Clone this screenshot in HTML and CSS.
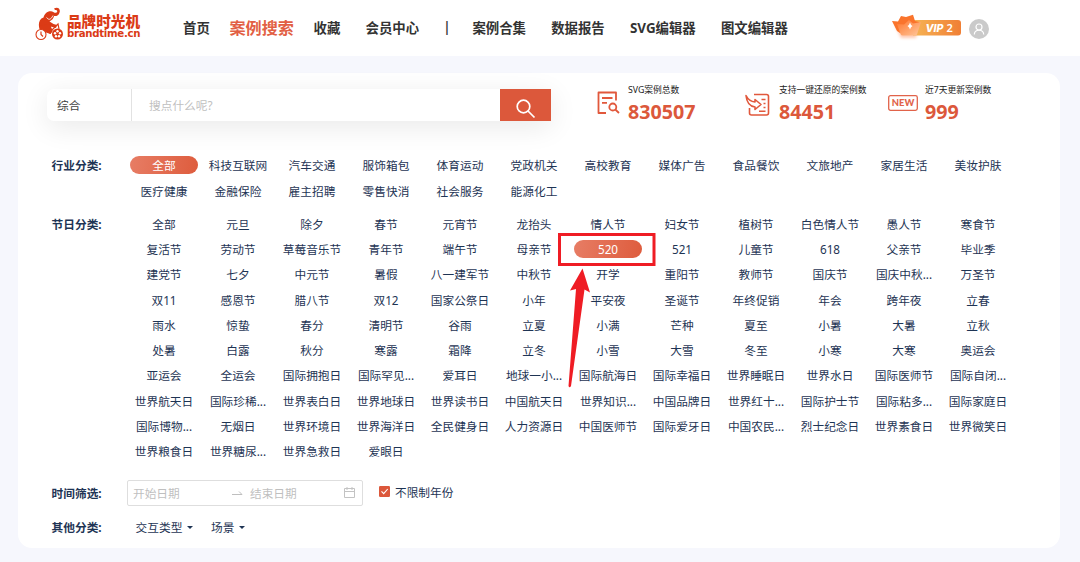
FILE: index.html
```html
<!DOCTYPE html>
<html lang="zh-CN">
<head>
    <meta charset="UTF-8">
    <meta name="viewport" content="width=device-width, initial-scale=1.0">
    <title>品牌时光机</title>
    <link rel="stylesheet" href="styles.css">
</head>
<body>
    <header class="header">
        <a class="logo">
            <svg width="30" height="36" viewBox="0 0 30 36">
                <g fill="#db3b16">
                    <path d="M4.500 22C3 17 4 12 8.500 10.500C9.500 6.500 13 3.500 17 4.500C18.500 5 20 6.500 21.500 5.500C23 4.500 22 2.500 20 3L19 1.500C22.500-.5 25.500 1.500 24.700 5C24 8.500 21 9.500 19 9C18.500 11.500 17 13 14.500 14.500L18.500 17L22 18L21 21L15.500 19.500L17.500 24L15.500 27L11 24.500L8 26Z"/>
                    <circle cx="22.500" cy="27" r="5.500"/>
                </g>
                <path d="M11.500 10.500Q15 15 18 8.500" fill="none" stroke="#fff" stroke-width=".8"/>
                <circle cx="6" cy="27.500" r="5" fill="#fff" stroke="#db3b16" stroke-width="1.100"/>
                <path d="M4.500 19L15 17L17.500 24L15.500 27L11 25.500Q9 21.800 5 22Z" fill="#db3b16"/>
                <path d="M6 24.500V27.500L8 29.500M16 24L23 17L24 22" fill="none" stroke="#db3b16" stroke-width="1.200"/>
                <g fill="#fff">
                    <circle cx="22.500" cy="24.300" r="1.200"/><circle cx="25" cy="26.300" r="1.200"/>
                    <circle cx="24" cy="29.200" r="1.200"/><circle cx="21" cy="29.200" r="1.200"/><circle cx="20" cy="26.300" r="1.200"/>
                </g>
            </svg>
            <span class="logo-text">
                <b class="logo-name">品牌时光机</b>
                <b class="logo-domain">brandtime.cn</b>
            </span>
        </a>
        <nav class="nav">
            <a>首页</a>
            <a class="active">案例搜索</a>
            <a>收藏</a>
            <a>会员中心</a>
            <span class="divider">|</span>
            <a>案例合集</a>
            <a>数据报告</a>
            <a>SVG编辑器</a>
            <a>图文编辑器</a>
        </nav>
        <div class="user">
            <svg width="72" height="28" viewBox="0 0 72 28">
                <defs>
                    <linearGradient id="bar"><stop offset="0" stop-color="#f6b455"/><stop offset="1" stop-color="#f07f35"/></linearGradient>
                    <linearGradient id="crown" x2="1" y2="1"><stop offset="0" stop-color="#ff762c"/><stop offset="1" stop-color="#ffc89d"/></linearGradient>
                    <filter id="glow" x="-30%" y="-30%" width="160%" height="160%"><feGaussianBlur stdDeviation="1.500"/></filter>
                </defs>
                <path d="M4 11L28 10L25 24H10Z" fill="#ff8a55" opacity=".45" filter="url(#glow)"/>
                <path d="M22 6H67Q70 6 70 9V18.500Q70 21.500 67 21.500H22Z" fill="url(#bar)"/>
                <path d="M1 7L7 7.500L10 2L15 3L22 .8L24 7L28 8L24 19H9L6 17Z" fill="#fa742c"/>
                <path d="M6 10L13 10.500L18 6L22 9.500L30 8L26 20.500Q25 21.500 24 21.500H12Q10 21.500 9.500 20Z" fill="url(#crown)"/>
                <path d="M19 8.500Q19.500 11 21.500 12Q19.500 13 19 15.500Q18.500 13 16.500 12Q18.500 11 19 8.500Z" fill="#fff"/>
                <text class="vip-name" x="34.500" y="18" textLength="18" lengthAdjust="spacingAndGlyphs">VIP</text>
                <text class="vip-level" x="55.500" y="18">2</text>
            </svg>
            <svg class="avatar" width="20" height="20" viewBox="0 0 20 20">
                <circle cx="10" cy="10" r="10" fill="#cacaca"/>
                <g fill="none" stroke="#fff" stroke-width="1.200"><circle cx="10" cy="8" r="3"/><path d="M5.300 15.500C5.500 9.800 14.500 9.800 14.700 15.500"/></g>
            </svg>
        </div>
    </header>

    <main class="panel">
        <div class="top">
            <div class="search">
                <div class="search-type">综合</div>
                <div class="search-input">搜点什么呢?</div>
                <button class="search-btn">
                    <svg width="20" height="20" viewBox="0 0 20 20" fill="none" stroke="#fff" stroke-width="1.700"><circle cx="7.500" cy="7.500" r="6.300"/><path d="M12 12L18.500 18.500"/></svg>
                </button>
            </div>
            <div class="stat stat-total">
                <svg width="23" height="24" viewBox="0 0 23 24" fill="none" stroke="#e1583c" stroke-width="1.800">
                    <path d="M19 9.500V1.500H1.500V22H9M5 7H15.500M5 11.800H10" stroke-linejoin="round"/><circle cx="15.800" cy="16" r="3.500"/><path d="M18.300 18.500L22 22"/>
                </svg>
                <div><p>SVG案例总数</p><strong>830507</strong></div>
            </div>
            <div class="stat stat-restore">
                <svg width="25" height="24" viewBox="0 0 25 24" fill="none" stroke="#e1583c" stroke-width="1.600">
                    <path d="M9 1.500H21.500Q23.500 1.500 23.500 3.500V20Q23.500 22 21.500 22H6.500Q4.500 22 4.500 20V15"/>
                    <path d="M1 2.500Q4 8.500 10 9V6.500L16 11.500L10 16.500V14Q2 13 1 2.500Z" stroke-linejoin="round"/>
                    <path d="M16.500 6.500H20.500M18.500 10.500H20.500M18.500 14.500H20.500M14 18.300H20.500"/>
                </svg>
                <div><p>支持一键还原的案例数</p><strong>84451</strong></div>
            </div>
            <div class="stat stat-new">
                <svg width="30" height="16" viewBox="0 0 30 16">
                    <rect x=".7" y=".7" width="28.600" height="14.600" rx="1.800" fill="none" stroke="#e1634a" stroke-width="1.300"/>
                    <text class="new-text" x="3.800" y="11.300" textLength="22.500" lengthAdjust="spacingAndGlyphs">NEW</text>
                </svg>
                <div><p>近7天更新案例数</p><strong>999</strong></div>
            </div>
        </div>

        <section class="filter">
            <h3>行业分类:</h3>
            <div class="options">
                <a class="selected">全部</a><a>科技互联网</a><a>汽车交通</a><a>服饰箱包</a><a>体育运动</a><a>党政机关</a><a>高校教育</a><a>媒体广告</a><a>食品餐饮</a><a>文旅地产</a><a>家居生活</a><a>美妆护肤</a>
                <a>医疗健康</a><a>金融保险</a><a>雇主招聘</a><a>零售快消</a><a>社会服务</a><a>能源化工</a>
            </div>
        </section>

        <section class="filter festival">
            <h3>节日分类:</h3>
            <div class="options">
                <a>全部</a><a>元旦</a><a>除夕</a><a>春节</a><a>元宵节</a><a>龙抬头</a><a>情人节</a><a>妇女节</a><a>植树节</a><a>白色情人节</a><a>愚人节</a><a>寒食节</a>
                <a>复活节</a><a>劳动节</a><a>草莓音乐节</a><a>青年节</a><a>端午节</a><a>母亲节</a>
                <a class="selected marked">520
                    <svg class="marker" width="98" height="156" viewBox="0 0 98 156">
                        <rect x="1.500" y="1.500" width="94.500" height="30" fill="none" stroke="#ef1c24" stroke-width="3"/>
                        <path d="M24.500 35.500L32 59.500L26.500 56.500L13 153Q11.500 155.500 10.500 153L18 56L12 57.500Z" fill="#ef1c24"/>
                    </svg>
                </a>
                <a>521</a><a>儿童节</a><a>618</a><a>父亲节</a><a>毕业季</a>
                <a>建党节</a><a>七夕</a><a>中元节</a><a>暑假</a><a>八一建军节</a><a>中秋节</a><a>开学</a><a>重阳节</a><a>教师节</a><a>国庆节</a><a>国庆中秋...</a><a>万圣节</a>
                <a>双11</a><a>感恩节</a><a>腊八节</a><a>双12</a><a>国家公祭日</a><a>小年</a><a>平安夜</a><a>圣诞节</a><a>年终促销</a><a>年会</a><a>跨年夜</a><a>立春</a>
                <a>雨水</a><a>惊蛰</a><a>春分</a><a>清明节</a><a>谷雨</a><a>立夏</a><a>小满</a><a>芒种</a><a>夏至</a><a>小暑</a><a>大暑</a><a>立秋</a>
                <a>处暑</a><a>白露</a><a>秋分</a><a>寒露</a><a>霜降</a><a>立冬</a><a>小雪</a><a>大雪</a><a>冬至</a><a>小寒</a><a>大寒</a><a>奥运会</a>
                <a>亚运会</a><a>全运会</a><a>国际拥抱日</a><a>国际罕见...</a><a>爱耳日</a><a>地球一小...</a><a>国际航海日</a><a>国际幸福日</a><a>世界睡眠日</a><a>世界水日</a><a>国际医师节</a><a>国际自闭...</a>
                <a>世界航天日</a><a>国际珍稀...</a><a>世界表白日</a><a>世界地球日</a><a>世界读书日</a><a>中国航天日</a><a>世界知识...</a><a>中国品牌日</a><a>世界红十...</a><a>国际护士节</a><a>国际粘多...</a><a>国际家庭日</a>
                <a>国际博物...</a><a>无烟日</a><a>世界环境日</a><a>世界海洋日</a><a>全民健身日</a><a>人力资源日</a><a>中国医师节</a><a>国际爱牙日</a><a>中国农民...</a><a>烈士纪念日</a><a>世界素食日</a><a>世界微笑日</a>
                <a>世界粮食日</a><a>世界糖尿...</a><a>世界急救日</a><a>爱眼日</a>
            </div>
        </section>

        <section class="filter time">
            <h3>时间筛选:</h3>
            <div class="range">
                <span class="range-start">开始日期</span>
                <svg width="11" height="6" viewBox="0 0 11 6" fill="none" stroke="#bfbfbf"><path d="M0 4.500H10L7 1.500"/></svg>
                <span class="range-end">结束日期</span>
                <svg width="11" height="11" viewBox="0 0 11 11" fill="none" stroke="#c3c3c3"><path d="M.5 1.500H10.500V10.500H.5ZM.5 4.500H10.500M3 0V3M8 0V3"/></svg>
            </div>
            <label class="check">
                <svg width="11" height="11" viewBox="0 0 11 11"><rect width="11" height="11" rx="1.200" fill="#dc583b"/><path d="M2.500 5.300L4.700 7.700L8.700 3" fill="none" stroke="#fff" stroke-width="1.100"/></svg>
                不限制年份
            </label>
        </section>

        <section class="filter other">
            <h3>其他分类:</h3>
            <span class="dropdown">交互类型</span>
            <span class="dropdown">场景</span>
        </section>
    </main>
</body>
</html>
```
FILE: styles.css
```css
* {
    box-sizing: border-box;
}
body {
    margin: 0;
    height: 562px;
    overflow: hidden;
    background: #f6f7fd;
    color: #1e3454;
    font-family: "Noto Sans", "Noto Sans CJK SC", sans-serif;
    font-size: 11.7px;
}
h3, p {
    margin: 0;
}
svg {
    display: block;
    flex: none;
}
.header {
    display: flex;
    height: 56px;
    padding-left: 35px;
    background: #fff;
}
.logo {
    display: flex;
    width: 148px;
    padding-top: 7px;
    gap: 2px;
    color: #db3b16;
}
.logo-text {
    display: flex;
    flex-direction: column;
    padding-top: 7px;
    white-space: nowrap;
}
.logo-name {
    font-family: "Noto Sans CJK SC", sans-serif;
    font-size: 14.6px;
    font-weight: 900;
    line-height: 14px;
}
.logo-domain {
    font-family: "DejaVu Sans", sans-serif;
    font-size: 10.2px;
    line-height: 11px;
    letter-spacing: -0.3px;
}
.nav {
    display: flex;
    align-items: center;
    gap: 25.2px;
    width: 708px;
    padding-bottom: 2px;
    color: #333;
    font-size: 13.4px;
    font-weight: bold;
    white-space: nowrap;
}
.nav .active {
    margin: 0 -5.5px;
    color: #e25f44;
    font-size: 16.1px;
}
.nav .divider {
    width: 3px;
    margin-left: -1px;
    margin-right: 1px;
    font-weight: 600;
}
.user {
    display: flex;
    padding-top: 14px;
    gap: 6px;
}
.vip-name {
    font-family: Inter, sans-serif;
    font-size: 10.5px;
    font-style: italic;
    font-weight: 800;
    fill: #fff;
}
.vip-level {
    font-size: 11px;
    font-weight: 600;
    fill: #fff;
}
.avatar {
    margin-top: 5px;
}
.panel {
    width: 1042px;
    height: 475px;
    margin: 17px 0 0 18px;
    padding-top: 16px;
    border-radius: 14px;
    background: #fff;
}
.top {
    display: flex;
    height: 64.3px;
    padding-left: 29px;
}
.search {
    display: flex;
    width: 504px;
    height: 32px;
    border-radius: 7px 0 0 7px;
    background: #fff;
    box-shadow: 0 6px 28px rgba(0, 0, 0, 0.09);
    line-height: 33px;
}
.search-type {
    width: 85px;
    padding-left: 10px;
    border-right: 1px solid #e2e2e2;
    color: #444;
}
.search-input {
    flex: 1;
    padding-left: 17px;
    color: #bfbfbf;
}
.search-btn {
    display: flex;
    justify-content: center;
    width: 51px;
    padding: 10px 0 0;
    border: 0;
    background: #dc583b;
}
.stat {
    display: flex;
    color: #222;
    white-space: nowrap;
}
.stat p {
    height: 11px;
    margin-top: -4px;
    font-size: 8.75px;
    line-height: 11px;
}
.stat strong {
    display: block;
    margin-top: 3px;
    color: #dc583b;
    font-size: 19.7px;
    line-height: 26px;
}
.stat-total {
    width: 148px;
    margin-left: 46px;
    gap: 8px;
}
.stat-restore {
    width: 143px;
    gap: 9px;
}
.stat-new {
    gap: 7px;
}
.stat > svg {
    margin-top: 2px;
}
.stat-restore > svg {
    margin-top: 4px;
}
.stat-new > svg {
    margin-top: 6px;
}
.new-text {
    font-family: Lato, sans-serif;
    font-size: 9.5px;
    font-weight: 900;
    fill: #e1634a;
}
.filter {
    display: flex;
    padding-left: 33.6px;
}
.filter h3 {
    width: 75.4px;
    font-size: 11.7px;
    line-height: 25.3px;
}
.options {
    display: grid;
    grid-template-columns: repeat(12, 74px);
    grid-auto-rows: 25.28px;
    line-height: 25.28px;
    text-align: center;
    white-space: nowrap;
}
.options .selected {
    width: 67.5px;
    height: 18.5px;
    margin: 2.6px auto 0;
    border-radius: 10px;
    background: linear-gradient(100deg, #e77d65, #de5c3d);
    color: #fff;
    line-height: 19.4px;
}
.options .marked {
    position: relative;
}
.marker {
    position: absolute;
    left: -16px;
    top: -6.6px;
}
.festival {
    margin-top: 8px;
}
.time {
    height: 26px;
    margin-top: 15.4px;
}
.time h3 {
    line-height: 27px;
}
.range {
    display: flex;
    align-items: center;
    width: 236px;
    height: 26px;
    padding: 0 7px 0 5px;
    border: 1px solid #dedede;
    border-radius: 2px;
    color: #bfbfbf;
}
.range-start {
    width: 99px;
}
.range-end {
    flex: 1;
    padding-left: 7px;
}
.check {
    display: flex;
    align-items: center;
    height: 24px;
    margin-left: 16px;
    gap: 5px;
}
.other {
    margin-top: 9px;
    line-height: 25px;
}
.dropdown {
    display: flex;
    align-items: center;
    margin-left: 8.6px;
    margin-right: 9px;
    gap: 5px;
}
.dropdown::after {
    content: "";
    border: 3px solid transparent;
    border-top: 3.5px solid #1e3454;
    border-bottom: 0;
}
```
